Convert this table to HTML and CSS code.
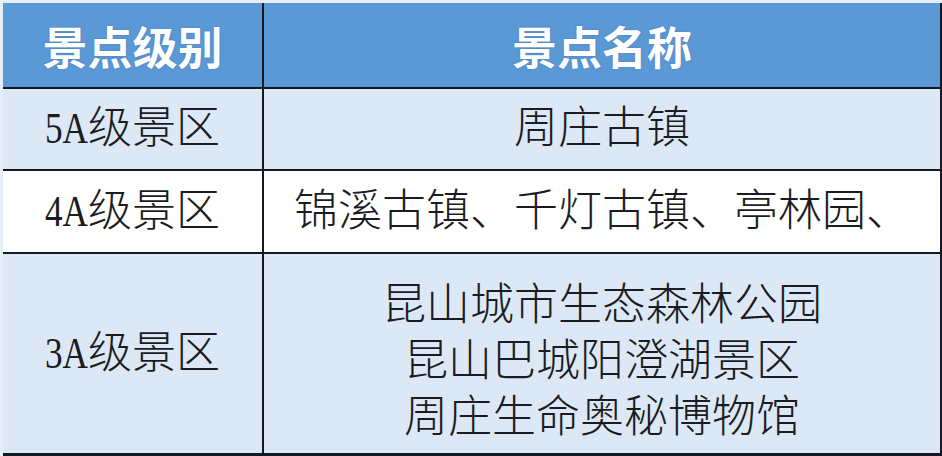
FILE: index.html
```html
<!DOCTYPE html>
<html lang="zh-CN">
<head>
<meta charset="utf-8">
<title>景点级别</title>
<link rel="stylesheet" href="styles.css">
</head>
<body>
<div class="frame">
  <div class="grid">
    <div class="cell head">景点级别</div>
    <div class="cell head">景点名称</div>
    <div class="cell tint"><span class="lat">5A</span>级景区</div>
    <div class="cell tint">周庄古镇</div>
    <div class="cell plain"><span class="lat">4A</span>级景区</div>
    <div class="cell plain">锦溪古镇、千灯古镇、亭林园、</div>
    <div class="cell tint"><span class="lat">3A</span>级景区</div>
    <div class="cell tint multi">
      <div class="line">昆山城市生态森林公园</div>
      <div class="line">昆山巴城阳澄湖景区</div>
      <div class="line">周庄生命奥秘博物馆</div>
    </div>
  </div>
</div>
</body>
</html>
```

FILE: styles.css
```css
html, body {
  margin: 0;
  padding: 0;
  background: #ffffff;
}
.frame {
  width: 942px;
  height: 456px;
  box-sizing: border-box;
  padding: 3px 0 0 3px;
  background: #e4edf8;
}
.grid {
  display: grid;
  grid-template-columns: 259px 676px;
  grid-template-rows: 84px 80px 81px 199px;
  column-gap: 2px;
  row-gap: 2px;
  padding: 0 2px 3px 0;
  background: #141923;
  width: 939px;
  height: 453px;
  box-sizing: border-box;
}
.cell {
  display: flex;
  align-items: center;
  justify-content: center;
  font-family: "Liberation Serif", "Noto Sans CJK SC", serif;
  font-size: 44px;
  font-weight: 300;
  line-height: 1;
  color: #1a1c22;
  white-space: nowrap;
}
.head {
  background: #5a98d6;
  color: #ffffff;
  font-family: "Noto Sans CJK SC", sans-serif;
  font-weight: 700;
  font-size: 45px;
  text-shadow: 0 0 2px rgba(40, 70, 120, 0.35);
}
.tint {
  background: #dde8f6;
}
.plain {
  background: #ffffff;
}
.lat {
  display: inline-block;
  font-weight: 400;
  transform: scaleX(0.8);
  transform-origin: left center;
  margin-right: -11px;
}
.multi {
  flex-direction: column;
  padding-top: 6px;
  box-sizing: border-box;
}
.line {
  line-height: 56px;
  font-family: "Noto Sans CJK SC", sans-serif;
}
```
